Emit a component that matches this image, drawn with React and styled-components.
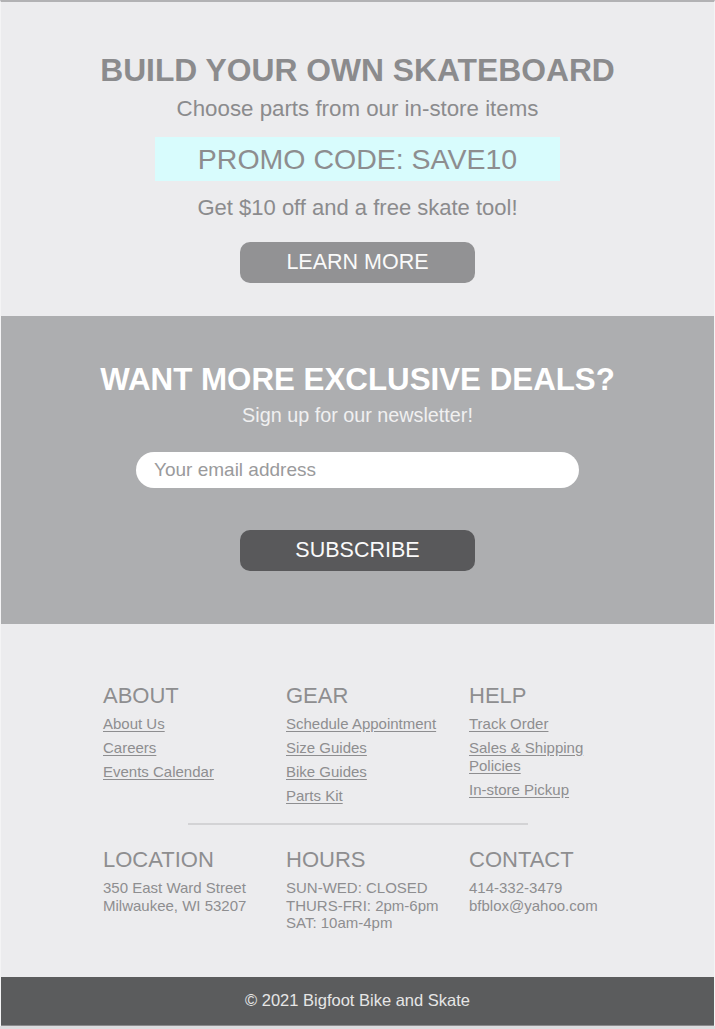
import styled, { createGlobalStyle } from "styled-components";

const GlobalStyle = createGlobalStyle`
  body {
    margin: 0;
    background: #dcdcde;
    font-family: "Liberation Sans", Arial, Helvetica, sans-serif;
  }
`;

const footerColumns = [
  {
    title: "ABOUT",
    links: ["About Us", "Careers", "Events Calendar"],
  },
  {
    title: "GEAR",
    links: ["Schedule Appointment", "Size Guides", "Bike Guides", "Parts Kit"],
  },
  {
    title: "HELP",
    links: ["Track Order", "Sales & Shipping Policies", "In-store Pickup"],
  },
];

const infoColumns = [
  {
    title: "LOCATION",
    lines: ["350 East Ward Street", "Milwaukee, WI 53207"],
  },
  {
    title: "HOURS",
    lines: ["SUN-WED: CLOSED", "THURS-FRI: 2pm-6pm", "SAT: 10am-4pm"],
  },
  {
    title: "CONTACT",
    lines: ["414-332-3479", "bfblox@yahoo.com"],
  },
];

export default function App() {
  return (
    <>
      <GlobalStyle />
      <Page>
        <Hero>
          <HeroTitle>BUILD YOUR OWN SKATEBOARD</HeroTitle>
          <HeroSub>Choose parts from our in-store items</HeroSub>
          <Promo>PROMO CODE: SAVE10</Promo>
          <HeroNote>Get $10 off and a free skate tool!</HeroNote>
          <Button $tone="light">LEARN MORE</Button>
        </Hero>

        <Newsletter>
          <NewsTitle>WANT MORE EXCLUSIVE DEALS?</NewsTitle>
          <NewsSub>Sign up for our newsletter!</NewsSub>
          <EmailInput type="email" placeholder="Your email address" />
          <Button $tone="dark" $top={42}>
            SUBSCRIBE
          </Button>
        </Newsletter>

        <Footer>
          <ColumnGrid>
            {footerColumns.map((col) => (
              <Column key={col.title}>
                <ColumnTitle>{col.title}</ColumnTitle>
                <LinkList>
                  {col.links.map((link) => (
                    <FooterLink key={link} href="#">
                      {link}
                    </FooterLink>
                  ))}
                </LinkList>
              </Column>
            ))}
          </ColumnGrid>

          <Divider />

          <ColumnGrid>
            {infoColumns.map((col) => (
              <Column key={col.title}>
                <ColumnTitle>{col.title}</ColumnTitle>
                <InfoText>
                  {col.lines.map((line) => (
                    <div key={line}>{line}</div>
                  ))}
                </InfoText>
              </Column>
            ))}
          </ColumnGrid>
        </Footer>

        <BottomBar>© 2021 Bigfoot Bike and Skate</BottomBar>
      </Page>
    </>
  );
}

const Page = styled.div`
  width: 713px;
  border-top: 2px solid #b2b2b4;
  border-left: 1px solid #f4f4f5;
  border-right: 1px solid #f4f4f5;
  background: #ececee;
`;

const Hero = styled.section`
  display: flex;
  flex-direction: column;
  align-items: center;
  padding: 50px 0 33px;
  background: #ececee;
`;

const HeroTitle = styled.h1`
  margin: 0;
  font-size: 31.8px;
  line-height: 36px;
  font-weight: 700;
  color: #8b8b8d;
`;

const HeroSub = styled.p`
  margin: 7px 0 0;
  font-size: 22.3px;
  line-height: 28px;
  color: #8b8b8d;
`;

const Promo = styled.div`
  margin-top: 14px;
  width: 405px;
  height: 44px;
  display: flex;
  align-items: center;
  justify-content: center;
  background: #d8fcfd;
  font-size: 28.5px;
  color: #8d8d8f;
`;

const HeroNote = styled.p`
  margin: 13px 0 0;
  font-size: 22px;
  line-height: 28px;
  color: #8b8b8d;
`;

const Button = styled.button`
  margin-top: ${(p) => p.$top ?? 20}px;
  width: 235px;
  height: 41px;
  border: none;
  border-radius: 10px;
  background: ${(p) => (p.$tone === "dark" ? "#59595b" : "#929294")};
  color: #fafafa;
  font-family: inherit;
  font-size: 21.5px;
  cursor: pointer;
`;

const Newsletter = styled.section`
  display: flex;
  flex-direction: column;
  align-items: center;
  padding: 46px 0 53px;
  background: #adaeb0;
`;

const NewsTitle = styled.h2`
  margin: 0;
  font-size: 31.3px;
  line-height: 36px;
  font-weight: 700;
  color: #ffffff;
`;

const NewsSub = styled.p`
  margin: 5px 0 0;
  font-size: 19.8px;
  line-height: 24px;
  color: #f0f0f0;
`;

const EmailInput = styled.input`
  margin-top: 25px;
  box-sizing: border-box;
  width: 443px;
  height: 36px;
  padding: 0 18px;
  border: none;
  border-radius: 18px;
  background: #ffffff;
  font-family: inherit;
  font-size: 19px;
  color: #555;
  outline: none;

  &::placeholder {
    color: #9a9a9c;
  }
`;

const Footer = styled.footer`
  padding: 59px 0 45px;
  background: #ececee;
`;

const ColumnGrid = styled.div`
  display: grid;
  grid-template-columns: repeat(3, 183px);
  padding-left: 102px;
`;

const Column = styled.div`
  display: flex;
  flex-direction: column;
`;

const ColumnTitle = styled.h3`
  margin: 0;
  font-size: 22px;
  line-height: 26px;
  font-weight: 400;
  color: #8e8e90;
`;

const LinkList = styled.div`
  margin-top: 6px;
  display: flex;
  flex-direction: column;
  align-items: flex-start;
  gap: 6px;
`;

const FooterLink = styled.a`
  max-width: 154px;
  font-size: 15px;
  line-height: 18px;
  color: #8e8e90;
  text-decoration: underline;
  text-underline-offset: 2px;
`;

const Divider = styled.hr`
  width: 340px;
  margin: 18px auto 22px;
  border: none;
  height: 2px;
  background: #d3d3d5;
`;

const InfoText = styled.div`
  margin-top: 6px;
  font-size: 15px;
  line-height: 17.5px;
  color: #8e8e90;
`;

const BottomBar = styled.div`
  height: 48px;
  display: flex;
  align-items: center;
  justify-content: center;
  background: #5b5c5d;
  border-bottom: 1px solid #8a8a8c;
  font-size: 16.5px;
  color: #e6e6e6;
`;
